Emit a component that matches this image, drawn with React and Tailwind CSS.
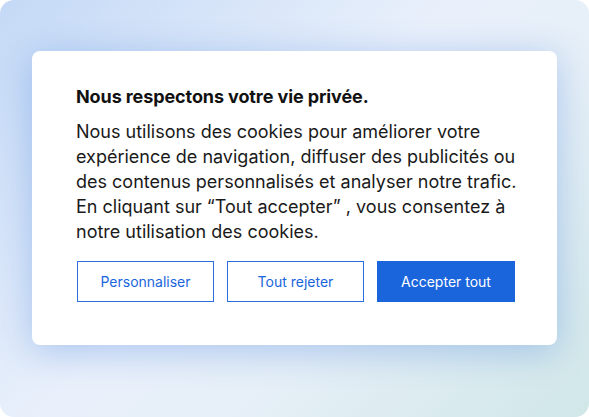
import React from "react";

const App = () => {
  return (
    <div className="w-[589px] h-[417px] bg-white [font-family:Inter,sans-serif]">
      <div className="w-full h-full rounded-[14px] bg-[linear-gradient(135deg,#c4d9f6_0%,#e9f0fb_45%,#e6eff7_65%,#d0e7e8_100%)] flex items-start justify-center pt-[51px]">
        <div className="w-[525px] h-[294px] bg-white rounded-[8px] shadow-[0_6px_36px_rgba(40,110,215,0.32)] pl-[44px] pr-[30px] pt-[34px]">
          <h2 className="text-[18px] font-bold text-[#111] leading-[24px] tracking-[-0.1px]">
            Nous respectons votre vie privée.
          </h2>
          <p className="mt-[10px] text-[18px] leading-[25px] text-[#1a1a1a]">
            Nous utilisons des cookies pour améliorer votre expérience de navigation, diffuser des publicités ou des contenus personnalisés et analyser notre trafic. En cliquant sur “Tout accepter” , vous consentez à notre utilisation des cookies.
          </p>
          <div className="mt-[17px] flex gap-[13px] pl-px">
            <button className="w-[137px] h-[41px] border border-[#2a6ee0] text-[#1a65dc] text-[14px] bg-white">
              Personnaliser
            </button>
            <button className="w-[137px] h-[41px] border border-[#2a6ee0] text-[#1a65dc] text-[14px] bg-white">
              Tout rejeter
            </button>
            <button className="w-[138px] h-[41px] bg-[#1a65dc] text-white text-[14px]">
              Accepter tout
            </button>
          </div>
        </div>
      </div>
    </div>
  );
};

export default App;
